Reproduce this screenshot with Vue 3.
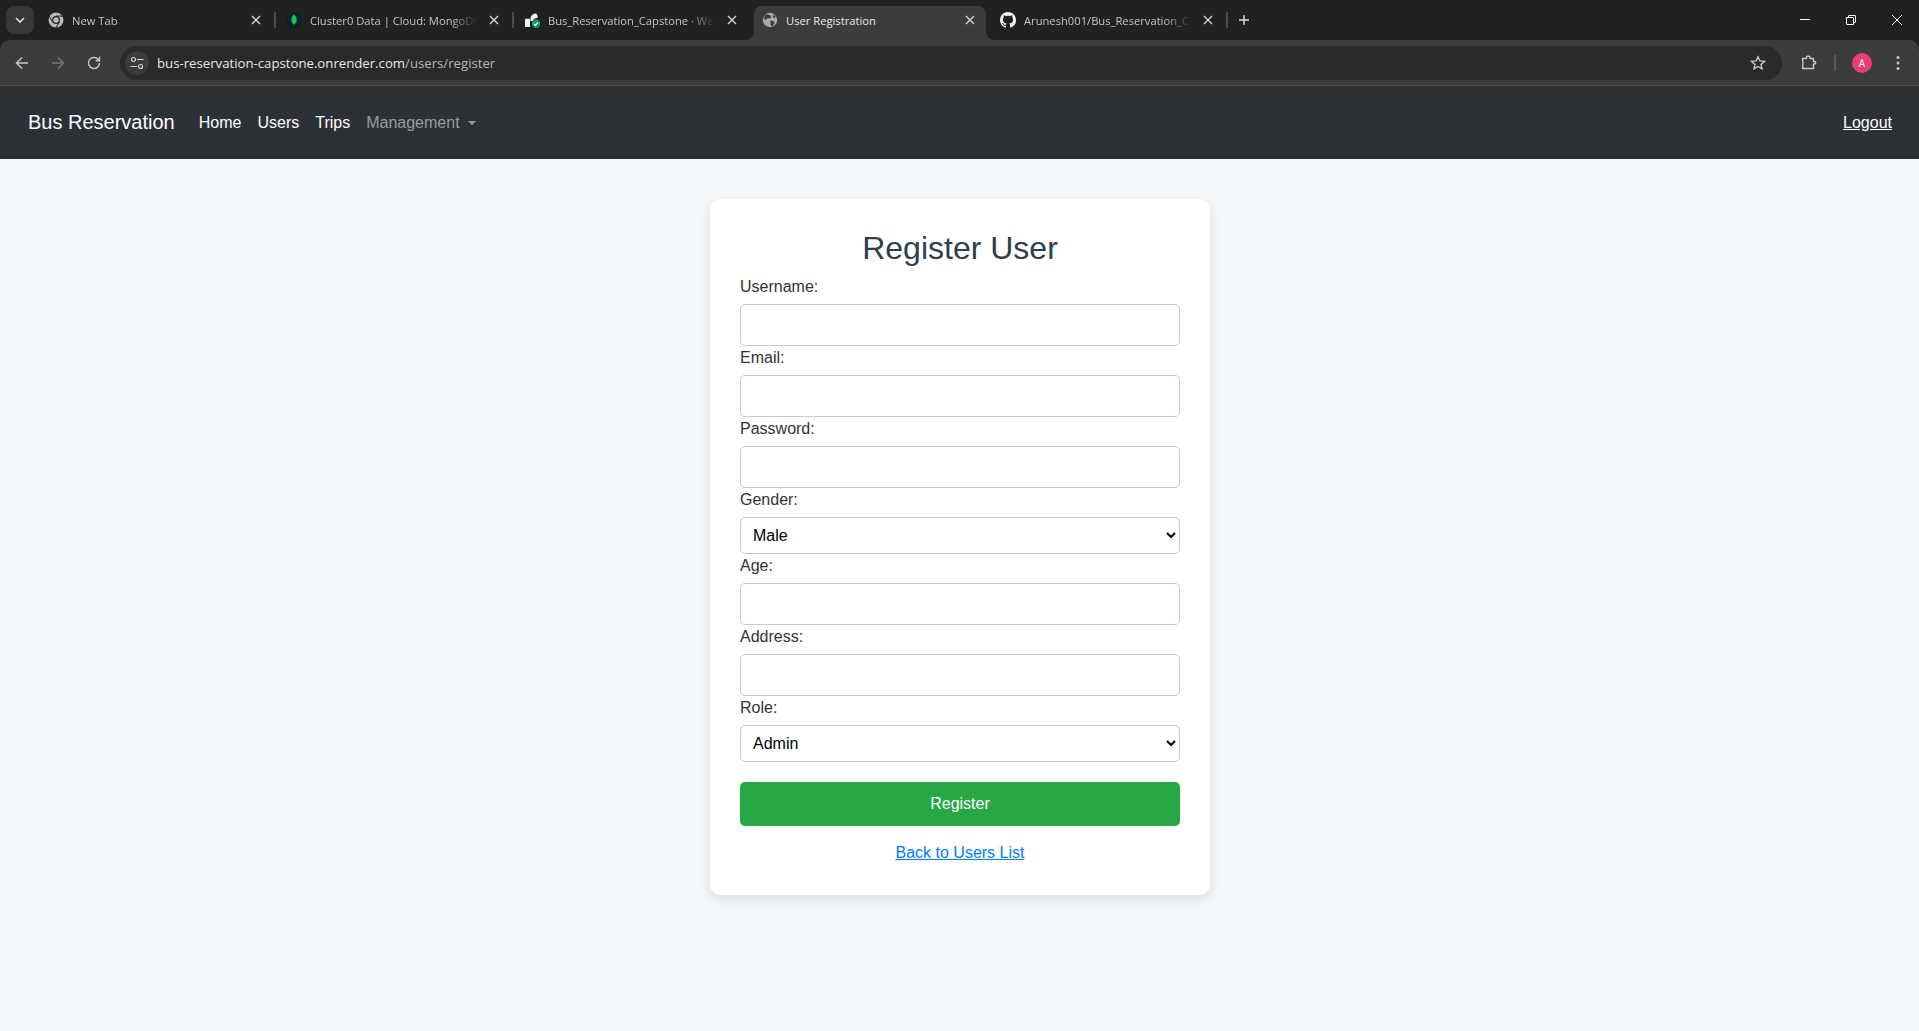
<template>
  <div class="window">
    <div class="tabstrip">
      <div class="tab-search">
        <svg width="10" height="6" viewBox="0 0 10 6"><path d="M1 1l4 4 4-4" fill="none" stroke="#e3e3e3" stroke-width="1.6" /></svg>
      </div>
      <template v-for="(tab, i) in tabs" :key="tab.title">
        <div class="tab" :class="{ active: tab.active }">
          <svg v-if="tab.icon === 'chrome'" class="favicon" viewBox="0 0 16 16">
            <circle cx="8" cy="8" r="7.5" fill="#b9b9b9" />
            <circle cx="8" cy="8" r="3.9" fill="#202221" />
            <circle cx="8" cy="8" r="2.7" fill="#b9b9b9" />
            <path d="M8 4.1h7M4.6 10l-3.5-6M11.4 10l-3.5 6" stroke="#202221" stroke-width="1" />
          </svg>
          <svg v-else-if="tab.icon === 'mongo'" class="favicon" viewBox="0 0 16 16">
            <circle cx="8" cy="8" r="8" fill="#06232e" />
            <path d="M8 2.2C10.4 5 11 7 10.7 8.8 10.4 10.7 9 11.8 8.3 12.4L8 14l-.3-1.6C7 11.8 5.6 10.7 5.3 8.8 5 7 5.6 5 8 2.2z" fill="#13c65b" />
          </svg>
          <svg v-else-if="tab.icon === 'render'" class="favicon" viewBox="0 0 16 16">
            <path d="M1 8c0-.8.5-1.300 1.300-1.300H6V15H1zM6.500 6.500C7 3.500 8.500 1.800 11 1.500c1.400-.1 2.500.9 2.500 2.300V6c-2.200-.1-4 1-4.700 3H6.500z" fill="#f2f2f2" />
            <circle cx="12" cy="11.800" r="4.200" fill="#0e9b6d" />
            <path d="M10 11.800l1.500 1.500 2.500-2.800" fill="none" stroke="#fff" stroke-width="1.200" />
          </svg>
          <svg v-else-if="tab.icon === 'globe'" class="favicon" viewBox="0 0 16 16">
            <circle cx="8" cy="8" r="7.200" fill="#a9aaab" />
            <path d="M4.500 2.200L8 3.200 9.500 5 7.500 6.500 5.500 6 4 8 2 6.500C2 5 3 3 4.500 2.200zM8.500 8.500l3 .5 1 2-2 3.300-1.500-.3-.5-3zM11.500 2.500l2 2-.5 1.500-2-.5z" fill="#3c3c3c" />
          </svg>
          <svg v-else class="favicon github" viewBox="0 0 16 16">
            <path fill="#f4f4f4" d="M8 0C3.580 0 0 3.580 0 8c0 3.540 2.290 6.530 5.470 7.590.4.070.55-.17.55-.38 0-.19-.01-.82-.01-1.490-2.010.37-2.530-.49-2.690-.94-.09-.23-.48-.94-.82-1.130-.28-.15-.68-.52-.01-.53.630-.01 1.080.58 1.230.82.720 1.210 1.870.870 2.330.660.070-.520.280-.870.510-1.070-1.780-.2-3.640-.89-3.640-3.950 0-.870.310-1.590.820-2.150-.080-.2-.360-1.020.080-2.120 0 0 .670-.210 2.200.820.640-.180 1.320-.270 2-.270s1.360.090 2 .270c1.530-1.040 2.200-.820 2.200-.820.440 1.100.160 1.920.080 2.120.510.560.820 1.270.820 2.150 0 3.070-1.870 3.750-3.650 3.950.290.250.540.730.540 1.480 0 1.070-.010 1.930-.010 2.200 0 .210.150.460.550.380A8.010 8.010 0 0 0 16 8c0-4.420-3.580-8-8-8z" />
          </svg>
          <span class="tab-title">{{ tab.title }}</span>
          <svg class="tab-close" width="10" height="10" viewBox="0 0 10 10"><path d="M1 1l8 8M9 1L1 9" stroke="#d6d6d6" stroke-width="1.400" /></svg>
        </div>
        <div class="tab-sep" :class="{ hidden: tab.active || tabs[i + 1]?.active }"></div>
      </template>
      <svg class="new-tab" width="12" height="12" viewBox="0 0 12 12"><path d="M6 1v10M1 6h10" stroke="#e3e3e3" stroke-width="1.400" /></svg>
      <div class="win-controls">
        <svg width="10" height="10" viewBox="0 0 10 10"><path d="M0 4.500h10" stroke="#fff" /></svg>
        <svg width="10" height="10" viewBox="0 0 10 10"><path d="M.5 2.500h6.500a.5.500 0 0 1 .5.500v6.500H1a.5.500 0 0 1-.5-.5zM2.500 2.500V1A.5.500 0 0 1 3 .5h6a.5.500 0 0 1 .5.500v6a.5.500 0 0 1-.5.500H7.500" fill="none" stroke="#fff" /></svg>
        <svg width="10" height="10" viewBox="0 0 10 10"><path d="M0 0l10 10M10 0L0 10" stroke="#fff" /></svg>
      </div>
    </div>

    <div class="toolbar">
      <div class="nav-buttons">
        <svg width="16" height="16" viewBox="0 0 16 16"><path d="M14 8H3M8 2.500L2.500 8 8 13.500" fill="none" stroke="#c7c7c7" stroke-width="1.500" /></svg>
        <svg width="16" height="16" viewBox="0 0 16 16"><path d="M2 8h11M8 2.500L13.500 8 8 13.500" fill="none" stroke="#757575" stroke-width="1.500" /></svg>
        <svg width="16" height="16" viewBox="0 0 16 16"><path d="M13.500 8a5.500 5.500 0 1 1-1.600-3.900L13.500 5.700M13.500 1.800v3.900H9.600" fill="none" stroke="#c7c7c7" stroke-width="1.500" /></svg>
      </div>
      <div class="omnibox">
        <div class="site-info">
          <svg width="14" height="14" viewBox="0 0 14 14">
            <circle cx="3.500" cy="3.500" r="2" fill="none" stroke="#d4d4d4" stroke-width="1.200" />
            <circle cx="10.500" cy="10.500" r="2" fill="none" stroke="#d4d4d4" stroke-width="1.200" />
            <path d="M7 3.500h6.500M.5 10.500H7" stroke="#d4d4d4" stroke-width="1.200" />
          </svg>
        </div>
        <span class="url"><span class="host">bus-reservation-capstone.onrender.com</span>/users/register</span>
        <svg class="star" width="16" height="16" viewBox="0 0 16 16"><path d="M8 1.800l1.900 4.100 4.500.5-3.400 3 1 4.400L8 11.500l-4 2.300 1-4.400-3.400-3 4.500-.5z" fill="none" stroke="#c7c7c7" stroke-width="1.400" /></svg>
      </div>
      <svg class="puzzle" width="16" height="16" viewBox="0 0 16 16"><path d="M1.500 3.500h4V2.200a1 1 0 0 1 1-1h1.500a1 1 0 0 1 1 1v1.300h3.500v3h1a1.200 1.200 0 0 1 0 2.500h-1v4.500h-11l.5-4.800-.5-5.200z" fill="none" stroke="#c7c7c7" stroke-width="1.400" stroke-linejoin="round" /></svg>
      <div class="tool-sep"></div>
      <div class="avatar">A</div>
      <svg class="dots" width="4" height="16" viewBox="0 0 4 16"><circle cx="2" cy="2.500" r="1.500" fill="#c7c7c7" /><circle cx="2" cy="8" r="1.500" fill="#c7c7c7" /><circle cx="2" cy="13.500" r="1.500" fill="#c7c7c7" /></svg>
    </div>

    <nav class="navbar">
      <a class="brand">Bus Reservation</a>
      <ul class="nav-links">
        <li>Home</li>
        <li>Users</li>
        <li>Trips</li>
        <li class="muted">Management<span class="caret"></span></li>
      </ul>
      <a class="logout">Logout</a>
    </nav>

    <main class="page">
      <form class="card" @submit.prevent>
        <h2>Register User</h2>
        <template v-for="field in fields" :key="field.label">
          <label>{{ field.label }}:</label>
          <select v-if="field.options">
            <option v-for="opt in field.options" :key="opt">{{ opt }}</option>
          </select>
          <input v-else :type="field.type" />
        </template>
        <button type="submit">Register</button>
        <a class="back-link">Back to Users List</a>
      </form>
    </main>
  </div>
</template>

<script setup>
const tabs = [
  { title: 'New Tab', icon: 'chrome' },
  { title: 'Cluster0 Data | Cloud: MongoDB Cloud', icon: 'mongo' },
  { title: 'Bus_Reservation_Capstone · Web Service', icon: 'render' },
  { title: 'User Registration', icon: 'globe', active: true },
  { title: 'Arunesh001/Bus_Reservation_Capstone', icon: 'github' },
];

const fields = [
  { label: 'Username', type: 'text' },
  { label: 'Email', type: 'email' },
  { label: 'Password', type: 'password' },
  { label: 'Gender', options: ['Male', 'Female', 'Other'] },
  { label: 'Age', type: 'number' },
  { label: 'Address', type: 'text' },
  { label: 'Role', options: ['Admin', 'User'] },
];
</script>

<style>
html,
body {
  margin: 0;
  background: #f4f7fa;
}
</style>

<style scoped>
.window {
  display: flex;
  flex-direction: column;
  min-height: 1031px;
  background: #202221;
  font-family: "Liberation Sans", Arial, sans-serif;
}

.tabstrip {
  display: flex;
  align-items: flex-end;
  height: 40px;
  background: #202221;
  box-sizing: border-box;
  padding-left: 6px;
}

.tab-search {
  display: flex;
  align-items: center;
  justify-content: center;
  align-self: flex-start;
  width: 28px;
  height: 28px;
  margin: 6px 6px 0 0;
  border-radius: 8px;
  background: #383838;
}

.tab {
  position: relative;
  display: flex;
  align-items: center;
  box-sizing: border-box;
  width: 232px;
  height: 34px;
  padding: 0 11px 6px 8px;
  border-radius: 8px 8px 0 0;
  color: #c4c6c6;
  font-family: "Open Sans", sans-serif;
  font-size: 11.2px;
}

.tab.active {
  background: #3c3c3c;
  color: #e8e8e8;
}

.tab.active::before,
.tab.active::after {
  content: '';
  position: absolute;
  bottom: 0;
  width: 8px;
  height: 8px;
}

.tab.active::before {
  left: -8px;
  background: radial-gradient(circle at 0 0, transparent 7.5px, #3c3c3c 8px);
}

.tab.active::after {
  right: -8px;
  background: radial-gradient(circle at 100% 0, transparent 7.5px, #3c3c3c 8px);
}

.favicon {
  flex: none;
  width: 16px;
  height: 16px;
  margin-right: 8px;
}

.tab-title {
  flex: 1;
  overflow: hidden;
  white-space: nowrap;
  -webkit-mask-image: linear-gradient(to right, #000 84%, transparent 100%);
  mask-image: linear-gradient(to right, #000 84%, transparent 100%);
}

.tab.active .tab-title {
  -webkit-mask-image: none;
  mask-image: none;
}

.tab-close {
  flex: none;
  margin-left: 12px;
}

.tab-sep {
  width: 2px;
  height: 16px;
  margin: 0 2px 12px;
  background: #4a4b4b;
}

.tab-sep.hidden {
  background: transparent;
}

.new-tab {
  margin: 0 0 14px 8px;
}

.win-controls {
  display: flex;
  align-self: center;
  gap: 36px;
  margin-left: auto;
  margin-right: 17px;
}

.toolbar {
  display: flex;
  align-items: center;
  box-sizing: border-box;
  height: 46px;
  padding-right: 19px;
  border-bottom: 1px solid #4d4d4d;
  border-radius: 10px 10px 0 0;
  background: #3c3c3c;
}

.nav-buttons {
  display: flex;
  gap: 20px;
  margin: 0 18px 0 14px;
}

.omnibox {
  display: flex;
  flex: 1;
  align-items: center;
  height: 34px;
  padding: 0 16px 0 5px;
  border-radius: 17px;
  background: #2a2a2a;
}

.site-info {
  display: flex;
  align-items: center;
  justify-content: center;
  width: 24px;
  height: 24px;
  margin-right: 8px;
  border-radius: 50%;
  background: #3c3c3c;
}

.url {
  flex: 1;
  color: #b6b6b6;
  font-family: "Open Sans", sans-serif;
  font-size: 13.2px;
}

.host {
  color: #e8e8e8;
}

.puzzle {
  margin-left: 19px;
}

.tool-sep {
  width: 2px;
  height: 16px;
  margin: 0 16px 0 17px;
  background: #5c5c5c;
}

.avatar {
  display: flex;
  align-items: center;
  justify-content: center;
  width: 20px;
  height: 20px;
  border-radius: 50%;
  background: #ea3d7c;
  color: #fff;
  font-family: "Open Sans", sans-serif;
  font-size: 10px;
}

.dots {
  margin-left: 24px;
}

.navbar {
  display: flex;
  align-items: center;
  height: 73px;
  box-sizing: border-box;
  padding: 0 27px 0 28px;
  background: #2c3136;
  color: #fff;
}

.brand {
  margin-right: 16px;
  font-size: 20px;
}

.nav-links {
  display: flex;
  margin: 0;
  padding: 0;
  list-style: none;
  font-size: 16px;
}

.nav-links li {
  padding: 0 8px;
}

.nav-links .muted {
  color: #9a9c9e;
}

.caret {
  display: inline-block;
  margin-left: 8px;
  vertical-align: 3px;
  border-top: 4.800px solid;
  border-right: 4.800px solid transparent;
  border-left: 4.800px solid transparent;
}

.logout {
  margin-left: auto;
  color: #fff;
  font-size: 16px;
  text-decoration: underline;
}

.page {
  display: flex;
  flex: 1;
  justify-content: center;
  align-items: flex-start;
  padding: 40px 0 0 1px;
  background: #f4f7fa;
}

.card {
  display: flex;
  flex-direction: column;
  box-sizing: border-box;
  width: 500px;
  padding: 30px;
  border-radius: 10px;
  background: #fff;
  box-shadow: 0 4px 12px rgba(0, 0, 0, 0.1);
}

h2 {
  margin: 0 0 8px;
  color: #2c3e50;
  font-size: 32px;
  font-weight: 400;
  line-height: 38px;
  text-align: center;
}

label {
  margin-bottom: 5px;
  color: #333;
  font-size: 16px;
  line-height: 24px;
}

input,
select {
  box-sizing: border-box;
  width: 100%;
  border: 1px solid #ccc;
  border-radius: 5px;
  background: #fff;
  font-family: inherit;
  font-size: 16px;
}

input {
  height: 42px;
  padding: 10px;
}

select {
  height: 37px;
  padding: 8px;
  color: #000;
}

button {
  height: 44px;
  margin-top: 20px;
  border: none;
  border-radius: 5px;
  background: #28a745;
  color: #fff;
  font-family: inherit;
  font-size: 16px;
}

.back-link {
  margin-top: 15px;
  color: #007bff;
  font-size: 16px;
  line-height: 24px;
  text-align: center;
  text-decoration: underline;
}
</style>
